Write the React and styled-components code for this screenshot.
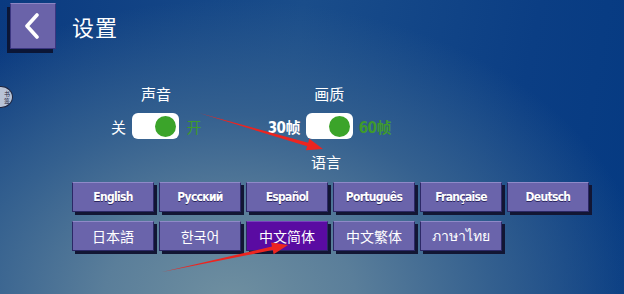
import React from "react";
import styled, { createGlobalStyle } from "styled-components";

const Global = createGlobalStyle`
  html, body { margin: 0; padding: 0; }
  body { width: 624px; height: 294px; overflow: hidden; }
`;

const Page = styled.div`
  position: relative;
  width: 624px;
  height: 294px;
  overflow: hidden;
  background:
    radial-gradient(ellipse 420px 300px at 230px 300px, #6f8fa0 0%, #5a7e9a 30%, #34608f 62%, rgba(20,70,135,0) 100%),
    linear-gradient(100deg, #0a3a80 0%, #1a4d8a 45%, #0b3e84 80%, #053a82 100%);
  font-family: "Noto Sans CJK SC", "Liberation Sans", sans-serif;
  color: #fff;
`;

const Header = styled.div`
  display: flex;
  align-items: center;
  padding: 2px 0 0 10px;
  height: 48px;
`;

const BackButton = styled.div`
  width: 44px;
  height: 44px;
  background: #6a63a9;
  border: 1px solid #3b3680;
  border-top-color: #8c86c4;
  box-shadow: -3px 4px 0 #0b1636;
  display: flex;
  align-items: center;
  justify-content: center;
`;

const Title = styled.div`
  margin-left: 16px;
  font-size: 22px;
  letter-spacing: 1px;
  line-height: 1;
`;

const ToggleRow = styled.div`
  display: flex;
  align-items: flex-end;
  gap: 67px;
  margin: 35px 0 0 111px;
`;

const Group = styled.div`
  display: flex;
  flex-direction: column;
  align-items: center;
`;

const GroupLabel = styled.div`
  font-size: 15px;
  line-height: 18px;
  margin-bottom: 10px;
`;

const SwitchLine = styled.div`
  display: flex;
  align-items: center;
  gap: ${p => p.$gap}px;
`;

const SideText = styled.span`
  font-family: "DejaVu Sans Condensed", "Noto Sans CJK SC", sans-serif;
  font-size: 15px;
  font-weight: ${p => (p.$bold ? 700 : 400)};
  color: ${p => (p.$on ? "#3f9a2c" : "#fff")};
  letter-spacing: -0.6px;
`;

const Switch = styled.div`
  width: 47px;
  height: 26px;
  background: #fff;
  border-radius: 6px;
  display: flex;
  align-items: center;
  justify-content: flex-end;
  padding-right: 3px;
  box-sizing: border-box;
`;

const Knob = styled.div`
  width: 21px;
  height: 21px;
  border-radius: 50%;
  background: #3ba42a;
`;

const LangTitle = styled.div`
  font-size: 15px;
  line-height: 18px;
  margin: 14px 0 0 311px;
`;

const LangGrid = styled.div`
  display: grid;
  grid-template-columns: repeat(6, 82px);
  grid-auto-rows: 30px;
  column-gap: 5px;
  row-gap: 9px;
  margin: 11px 0 0 72px;
`;

const LangButton = styled.div`
  box-sizing: border-box;
  background: ${p => (p.$active ? "#5a0ba2" : "#6a64ab")};
  border: 1px solid #2c2866;
  border-top-color: ${p => (p.$active ? "#7a3fc0" : "#8f8ac8")};
  box-shadow: 3px 3px 0 #121634;
  display: flex;
  align-items: center;
  justify-content: center;
  font-family: ${p =>
    p.$latin
      ? '"DejaVu Sans Condensed", sans-serif'
      : '"Noto Sans CJK SC", "Noto Sans CJK KR", "DejaVu Sans", sans-serif'};
  font-weight: ${p => (p.$latin ? 700 : 400)};
  font-size: ${p => (p.$latin ? 12 : 14)}px;
  letter-spacing: ${p => (p.$latin ? "-0.7px" : "0")};
  color: #fff;
  text-shadow: ${p => (p.$latin ? "0 1px 0 #2a2660" : "none")};
`;

const FloatBall = styled.div`
  position: absolute;
  left: -11px;
  top: 86px;
  width: 20px;
  height: 20px;
  border-radius: 50%;
  background: #b9c3d6;
  border: 1px solid #1c2440;
  display: flex;
  align-items: center;
  justify-content: flex-end;
  padding-right: 2px;
  box-sizing: content-box;
`;

const BallText = styled.span`
  width: 6px;
  font-size: 6px;
  line-height: 7px;
  color: #1c2440;
  word-break: break-all;
`;

const Arrows = styled.svg`
  position: absolute;
  left: 0;
  top: 0;
  pointer-events: none;
`;

const languages = [
  { name: "English", latin: true },
  { name: "Русский", latin: true },
  { name: "Español", latin: true },
  { name: "Português", latin: true },
  { name: "Française", latin: true },
  { name: "Deutsch", latin: true },
  { name: "日本語" },
  { name: "한국어" },
  { name: "中文简体", active: true },
  { name: "中文繁体" },
  { name: "ภาษาไทย" },
];

function Arrow({ x1, y1, x2, y2 }) {
  const dx = x2 - x1;
  const dy = y2 - y1;
  const len = Math.hypot(dx, dy);
  const ux = dx / len;
  const uy = dy / len;
  const nx = -uy;
  const ny = ux;
  const headLen = 16;
  const headW = 6;
  const bx = x2 - ux * headLen;
  const by = y2 - uy * headLen;
  const pts = [
    [x1, y1],
    [bx + nx * 1.8, by + ny * 1.8],
    [bx + nx * headW, by + ny * headW],
    [x2, y2],
    [bx - nx * headW, by - ny * headW],
    [bx - nx * 1.8, by - ny * 1.8],
  ]
    .map(p => p.join(","))
    .join(" ");
  return <polygon points={pts} fill="#ec2520" />;
}

export default function App() {
  return (
    <Page>
      <Global />
      <Header>
        <BackButton>
          <svg width="22" height="26" viewBox="0 0 22 26">
            <path d="M15 2 L5 13 L15 24" fill="none" stroke="#fff" strokeWidth="3.6" strokeLinecap="round" strokeLinejoin="round" />
          </svg>
        </BackButton>
        <Title>设置</Title>
      </Header>

      <ToggleRow>
        <Group>
          <GroupLabel>声音</GroupLabel>
          <SwitchLine $gap={7}>
            <SideText>关</SideText>
            <Switch><Knob /></Switch>
            <SideText $on>开</SideText>
          </SwitchLine>
        </Group>
        <Group>
          <GroupLabel>画质</GroupLabel>
          <SwitchLine $gap={6}>
            <SideText $bold>30帧</SideText>
            <Switch><Knob /></Switch>
            <SideText $bold $on>60帧</SideText>
          </SwitchLine>
        </Group>
      </ToggleRow>

      <LangTitle>语言</LangTitle>

      <LangGrid>
        {languages.map(l => (
          <LangButton key={l.name} $latin={l.latin} $active={l.active}>
            {l.name}
          </LangButton>
        ))}
      </LangGrid>

      <FloatBall>
        <BallText>书签</BallText>
      </FloatBall>

      <Arrows width="624" height="294" viewBox="0 0 624 294">
        <Arrow x1={199} y1={113} x2={323} y2={149} />
        <Arrow x1={162} y1={272} x2={288} y2={245} />
      </Arrows>
    </Page>
  );
}
